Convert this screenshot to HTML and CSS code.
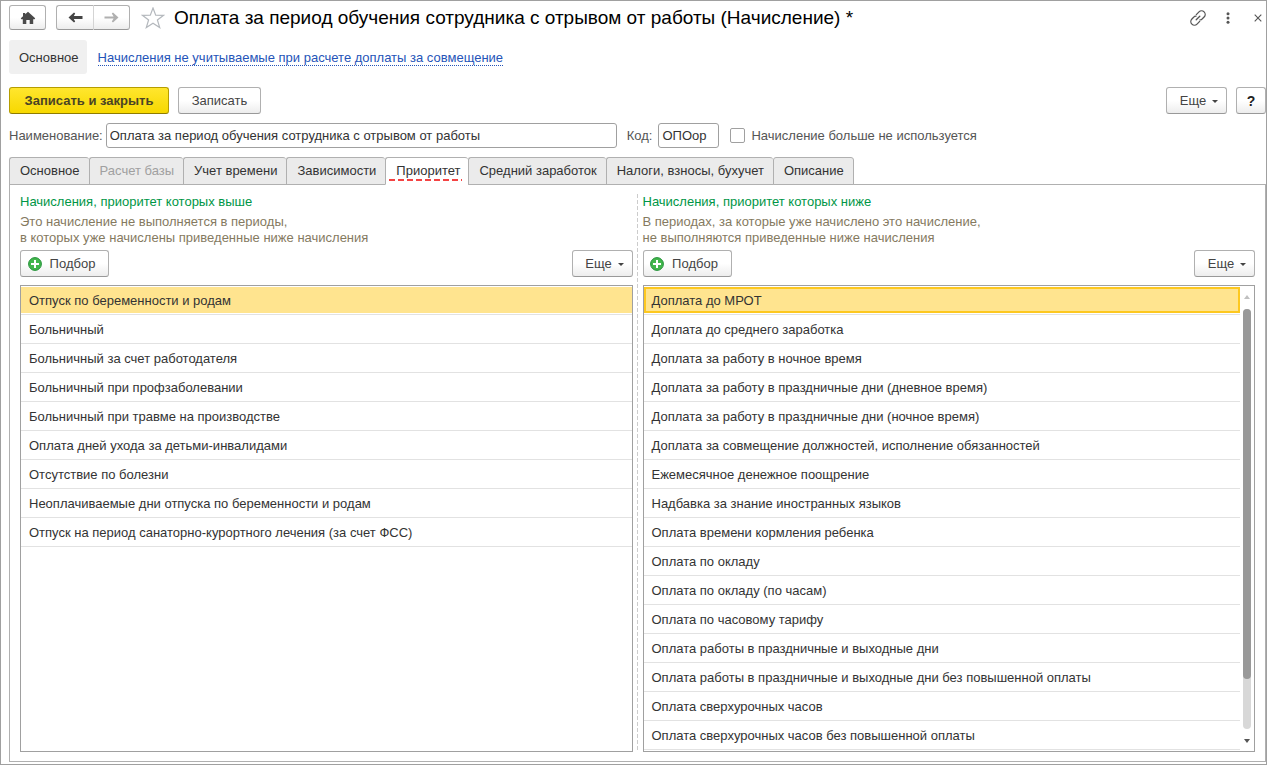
FILE: index.html
```html
<!DOCTYPE html>
<html lang="ru">
<head>
<meta charset="utf-8">
<title>Оплата за период обучения сотрудника с отрывом от работы (Начисление) *</title>
<link rel="stylesheet" href="styles.css">
</head>
<body>
<div class="window">
  <header class="titlebar">
    <button class="btn btn-home" type="button" aria-label="Домой">
      <svg width="16" height="14" viewBox="0 0 16 14"><path fill="#4a4a4a" d="M8 0.8 L15.2 7.2 L14.6 8.2 H13.2 V13 H9.7 V9 H6.3 V13 H2.8 V8.2 H1.4 L0.8 7.2 L3 5.2 V2 H5.2 V3.2 Z"/></svg>
    </button>
    <div class="nav">
      <button class="btn nav-back" type="button" aria-label="Назад">
        <svg width="15" height="11" viewBox="0 0 15 11"><path fill="#444" d="M0.5 5.5 L6 0.5 L7.2 1.4 L5.8 4.1 H14.5 V6.9 H5.8 L7.2 9.6 L6 10.5 Z"/></svg>
      </button>
      <button class="btn nav-forward" type="button" aria-label="Вперед" disabled>
        <svg width="15" height="11" viewBox="0 0 15 11"><path fill="#b0b0b0" d="M14.5 5.5 L9 0.5 L7.8 1.4 L9.6 4.5 H0.5 V6.5 H9.6 L7.8 9.6 L9 10.5 Z"/></svg>
      </button>
    </div>
    <button class="icon-btn star" type="button" aria-label="В избранное">
      <svg width="24" height="22" viewBox="0 0 24 22"><path fill="none" stroke="#b4b8bd" stroke-width="1.2" d="M12 1 L14.7 8.1 L22.6 8.3 L16.4 13 L18.7 20.6 L12 16.2 L5.3 20.6 L7.6 13 L1.4 8.3 L9.3 8.1 Z"/></svg>
    </button>
    <h1 class="title">Оплата за период обучения сотрудника с отрывом от работы (Начисление) *</h1>
    <div class="window-tools">
      <button class="icon-btn" type="button" aria-label="Ссылка">
        <svg width="16" height="16" viewBox="0 0 16 16" fill="none" stroke="#555" stroke-width="1.3" stroke-linecap="round"><path d="M6.3 4.6 L9 1.9 A3.6 3.6 0 0 1 14.1 7 L11.4 9.7 L10 9.9"/><path d="M9.7 11.4 L7 14.1 A3.6 3.6 0 0 1 1.9 9 L4.6 6.3 L6 6.1"/><path d="M6.2 9.8 L9.8 6.2"/></svg>
      </button>
      <button class="icon-btn" type="button" aria-label="Меню">
        <svg width="4" height="12" viewBox="0 0 4 12" fill="#555"><circle cx="2" cy="1.8" r="1.5"/><circle cx="2" cy="6" r="1.5"/><circle cx="2" cy="10.2" r="1.5"/></svg>
      </button>
      <button class="icon-btn close" type="button" aria-label="Закрыть">
        <svg width="8" height="8" viewBox="0 0 8 8" stroke="#555" stroke-width="1.1"><path d="M0.7 0.7 L7.3 7.3 M7.3 0.7 L0.7 7.3"/></svg>
      </button>
    </div>
  </header>

  <nav class="sections">
    <span class="section-current">Основное</span>
    <a class="section-link" href="#">Начисления не учитываемые при расчете доплаты за совмещение</a>
  </nav>

  <div class="commands">
    <button class="btn btn-primary" type="button">Записать и закрыть</button>
    <button class="btn btn-save" type="button">Записать</button>
    <button class="btn btn-more push" type="button">Еще <span class="caret"></span></button>
    <button class="btn btn-help" type="button">?</button>
  </div>

  <div class="fields">
    <label for="name">Наименование:</label>
    <input class="text name" id="name" type="text" value="Оплата за период обучения сотрудника с отрывом от работы">
    <label class="code-label" for="code">Код:</label>
    <input class="text code" id="code" type="text" value="ОПОор">
    <input class="check" id="unused" type="checkbox">
    <label for="unused">Начисление больше не используется</label>
  </div>

  <div class="tabs" role="tablist">
    <button class="tab" type="button" role="tab">Основное</button>
    <button class="tab" type="button" role="tab" disabled>Расчет базы</button>
    <button class="tab" type="button" role="tab">Учет времени</button>
    <button class="tab" type="button" role="tab">Зависимости</button>
    <button class="tab tab-active" type="button" role="tab" aria-selected="true"><span class="tab-text">Приоритет</span></button>
    <button class="tab" type="button" role="tab">Средний заработок</button>
    <button class="tab" type="button" role="tab">Налоги, взносы, бухучет</button>
    <button class="tab" type="button" role="tab">Описание</button>
  </div>

  <main class="panel">
    <section class="column">
      <h2 class="heading">Начисления, приоритет которых выше</h2>
      <p class="hint">Это начисление не выполняется в периоды,<br>в которых уже начислены приведенные ниже начисления</p>
      <div class="list-commands">
        <button class="btn btn-pick" type="button"><svg width="14" height="14" viewBox="0 0 14 14"><circle cx="7" cy="7" r="6.4" fill="#42b64c" stroke="#25923a"/><path stroke="#fff" stroke-width="2" d="M7 3 V11 M3 7 H11"/></svg>Подбор</button>
        <button class="btn btn-more" type="button">Еще <span class="caret"></span></button>
      </div>
      <div class="list">
        <div class="list-view">
          <table class="rows">
            <tr class="selected"><td>Отпуск по беременности и родам</td></tr>
            <tr><td>Больничный</td></tr>
            <tr><td>Больничный за счет работодателя</td></tr>
            <tr><td>Больничный при профзаболевании</td></tr>
            <tr><td>Больничный при травме на производстве</td></tr>
            <tr><td>Оплата дней ухода за детьми-инвалидами</td></tr>
            <tr><td>Отсутствие по болезни</td></tr>
            <tr><td>Неоплачиваемые дни отпуска по беременности и родам</td></tr>
            <tr><td>Отпуск на период санаторно-курортного лечения (за счет ФСС)</td></tr>
          </table>
        </div>
      </div>
    </section>

    <div class="splitter"></div>

    <section class="column">
      <h2 class="heading">Начисления, приоритет которых ниже</h2>
      <p class="hint">В периодах, за которые уже начислено это начисление,<br>не выполняются приведенные ниже начисления</p>
      <div class="list-commands">
        <button class="btn btn-pick" type="button"><svg width="14" height="14" viewBox="0 0 14 14"><circle cx="7" cy="7" r="6.4" fill="#42b64c" stroke="#25923a"/><path stroke="#fff" stroke-width="2" d="M7 3 V11 M3 7 H11"/></svg>Подбор</button>
        <button class="btn btn-more" type="button">Еще <span class="caret"></span></button>
      </div>
      <div class="list">
        <div class="list-view">
          <table class="rows">
            <tr class="selected focused"><td>Доплата до МРОТ</td></tr>
            <tr><td>Доплата до среднего заработка</td></tr>
            <tr><td>Доплата за работу в ночное время</td></tr>
            <tr><td>Доплата за работу в праздничные дни (дневное время)</td></tr>
            <tr><td>Доплата за работу в праздничные дни (ночное время)</td></tr>
            <tr><td>Доплата за совмещение должностей, исполнение обязанностей</td></tr>
            <tr><td>Ежемесячное денежное поощрение</td></tr>
            <tr><td>Надбавка за знание иностранных языков</td></tr>
            <tr><td>Оплата времени кормления ребенка</td></tr>
            <tr><td>Оплата по окладу</td></tr>
            <tr><td>Оплата по окладу (по часам)</td></tr>
            <tr><td>Оплата по часовому тарифу</td></tr>
            <tr><td>Оплата работы в праздничные и выходные дни</td></tr>
            <tr><td>Оплата работы в праздничные и выходные дни без повышенной оплаты</td></tr>
            <tr><td>Оплата сверхурочных часов</td></tr>
            <tr><td>Оплата сверхурочных часов без повышенной оплаты</td></tr>
          </table>
        </div>
        <div class="scrollbar">
          <span class="arrow-up"></span>
          <div class="track"><div class="thumb"></div></div>
          <span class="arrow-down"></span>
        </div>
      </div>
    </section>
  </main>
</div>
</body>
</html>
```
FILE: styles.css
```css
* { box-sizing: border-box; }

body {
  margin: 0;
  background: #fff;
  color: #333;
  font: 13px/16px "Liberation Sans", Arial, sans-serif;
}

button, input { font: inherit; color: inherit; margin: 0; }

.window {
  display: flex;
  flex-direction: column;
  height: 100vh;
  padding: 3px 0 2px 8px;
  border: 1px solid #a0a0a0;
}

.btn {
  display: flex;
  align-items: center;
  justify-content: center;
  height: 27px;
  padding: 0;
  border: 1px solid #b0b0b0;
  border-bottom-color: #999;
  border-radius: 3px;
  background: linear-gradient(#fff 50%, #ededed);
  color: #444;
}

.icon-btn {
  display: flex;
  padding: 0;
  border: 0;
  background: none;
}

/* Title bar */
.titlebar { display: flex; align-items: center; height: 27px; }
.titlebar .btn { height: 25px; }
.btn-home { width: 37px; margin-right: 10px; }
.nav { display: flex; }
.nav .btn { width: 37px; }
.nav .nav-back { border-right: 0; border-radius: 3px 0 0 3px; }
.nav .nav-forward { border-left-color: #d4d4d4; border-radius: 0 3px 3px 0; }
.star { margin: 0 9px 0 11px; }
.title { margin: 0; color: #000; font-size: 19px; line-height: 24px; font-weight: 400; white-space: nowrap; }
.window-tools { display: flex; align-items: center; gap: 20px; margin-left: auto; }
.close { padding: 4px; }

/* Sections */
.sections { display: flex; align-items: center; gap: 11px; margin-top: 9px; }
.section-current { padding: 10px 8px 8px 10px; border-radius: 3px; background: #f0f0f0; }
.section-link { margin-top: 3px; color: #2554b8; text-decoration: none; border-bottom: 1px dotted #2554b8; line-height: 14px; }

/* Commands */
.commands { display: flex; gap: 9px; margin-top: 13px; }
.btn-primary {
  width: 160px;
  border-color: #b59d00;
  border-bottom-color: #8f7c00;
  background: linear-gradient(#ffe62e, #f7d800);
  color: #4a4425;
  font-weight: 700;
}
.btn-save { width: 83px; }
.push { margin-left: auto; }
.btn-more { width: 61px; gap: 6px; padding-left: 5px; }
.caret { margin-top: 2px; border: 3px solid transparent; border-top-color: #444; border-bottom: 0; }
.btn-help { width: 30px; color: #222; font-weight: 700; font-size: 14px; }

/* Fields */
.fields { display: flex; align-items: center; margin-top: 9px; color: #555; }
.text { height: 25px; padding: 0 3px; border: 1px solid #a0a0a0; border-radius: 3px; background: #fff; color: #333; }
.name { flex: 0 1 511px; margin-left: 3px; }
.code-label { margin-left: 10px; }
.code { width: 61px; margin-left: 6px; }
.check { appearance: none; width: 15px; height: 15px; margin: 0 6px 0 11px; border: 1px solid #a0a0a0; border-radius: 2px; background: #fff; }

/* Tabs */
.tabs { display: flex; margin-top: 9px; }
.tab {
  height: 28px;
  padding: 0 9px 0 10px;
  border: 1px solid #b0b0b0;
  border-right-width: 0;
  border-radius: 3px 3px 0 0;
  background: #ebebeb;
  white-space: nowrap;
}
.tab:last-child { border-right-width: 1px; }
.tab:disabled { color: #a0a0a0; }
.tab-active { padding: 0 6px 0 3px; border-bottom-color: #fff; background: #fff; }
.tab-text {
  display: block;
  padding: 2px 2px 2px 7px;
  background: repeating-linear-gradient(90deg, #f44343 0 6px, transparent 6px 9px) left bottom / 100% 2px no-repeat;
}

/* Panel */
.panel {
  display: flex;
  flex: 1;
  min-height: 0;
  margin-top: -1px;
  padding: 9px 10px;
  border: 1px solid #b0b0b0;
  position: relative;
  z-index: -1;
}
.column { display: flex; flex-direction: column; flex: 1 1 0; min-width: 0; }
.splitter {
  width: 1px;
  margin: 0 5px 0 4px;
  background: repeating-linear-gradient(#ccc 0 4px, transparent 4px 6px);
}
.heading { margin: 0; color: #009646; font-size: 13px; line-height: 16px; font-weight: 400; }
.hint { margin: 4px 0; color: #857a5f; }
.list-commands { display: flex; justify-content: space-between; }
.btn-pick { width: 89px; gap: 8px; padding-right: 6px; }

/* Lists */
.list { display: flex; flex: 1; min-height: 0; margin-top: 8px; border: 1px solid #a0a0a0; }
.list-view { flex: 1; min-width: 0; overflow: hidden; }
.rows { width: 100%; border-collapse: separate; border-spacing: 0; }
.rows td { height: 29px; padding: 2px 8px 0; border-bottom: 1px solid #e2e2e2; white-space: nowrap; }
.rows .selected td { background: linear-gradient(#ffe48f, #ffe48f) 0 1px / 100% 26px no-repeat; }
.rows .focused td { box-shadow: inset 0 1px #fff, inset 0 -1px #fff, inset 2px 0 #fdc820, inset -2px 0 #fdc820, inset 0 3px #fdc820, inset 0 -3px #fdc820; }

.scrollbar { display: flex; flex-direction: column; align-items: center; width: 14px; padding: 9px 0 8px; }
.arrow-up { border: 3px solid transparent; border-bottom: 4px solid #c0c0c0; border-top: 0; }
.arrow-down { border: 3px solid transparent; border-top: 4px solid #555; border-bottom: 0; }
.track { flex: 1; width: 8px; margin: 10px 0; border-radius: 4px; background: #d8d8d8; }
.thumb { height: 88%; border-radius: 4px; background: #999; }
```
